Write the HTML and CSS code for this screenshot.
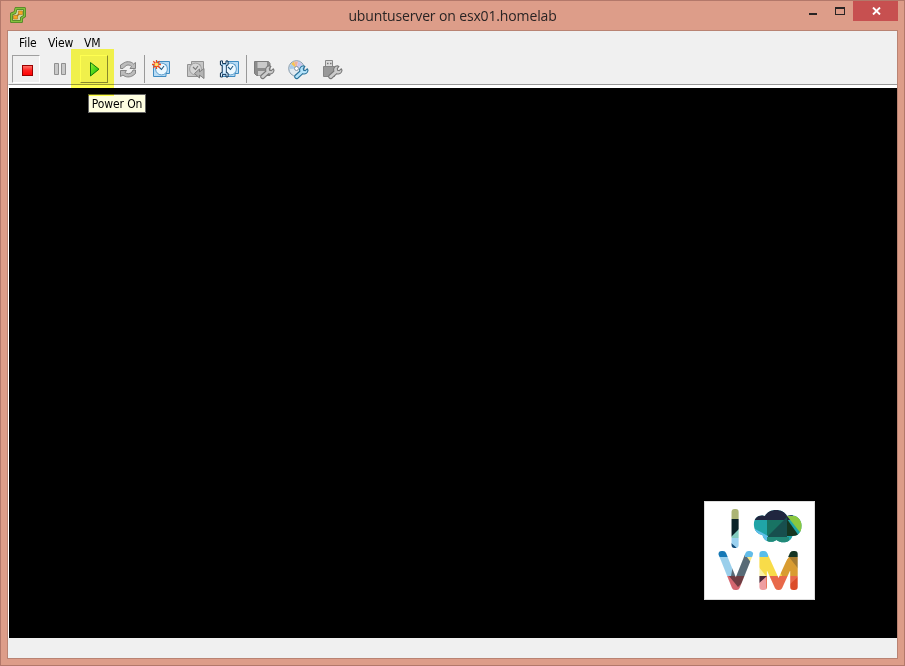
FILE: index.html
```
<!DOCTYPE html>
<html lang="en">
<head>
<meta charset="utf-8">
<title>ubuntuserver on esx01.homelab</title>
<link rel="stylesheet" href="styles.css">
</head>
<body>
<svg width="0" height="0" class="defs" aria-hidden="true">
  <defs>
    <linearGradient id="red" x1="0" y1="0" x2="0" y2="1"><stop offset="0" stop-color="#ff7a6e"/><stop offset=".5" stop-color="#ff2020"/><stop offset="1" stop-color="#f00"/></linearGradient>
    <linearGradient id="green" x1="0" y1="0" x2="1" y2="1"><stop offset="0" stop-color="#a0f0a0"/><stop offset=".6" stop-color="#3fd040"/><stop offset="1" stop-color="#10b020"/></linearGradient>
    <g id="wrench"><path d="M7 15.500l4.800-4.300c-.8-2.800.8-5.300 3.700-5.400l1.300.6-1.500 2.300.3 1.500 1.600.4 2-1.700.8 1.300c-.2 3-2.700 4.300-5.200 3.500l-5 4.500c-2 1.300-4-1-2.800-2.700z" fill="var(--fill)" stroke="var(--edge)" stroke-width="1.100"/></g>
    <g id="clock"><path d="M5.500 1.500h12v12h-12z" fill="var(--back)" stroke="var(--rim)"/><path d="M1.500 4.500h12.500v12h-12.500z" fill="var(--back)" stroke="var(--rim)"/><circle cx="9.500" cy="9" r="5.900" fill="var(--face)" stroke="var(--rim)" stroke-width=".8"/><path d="M7 7l2.500 2.500L12 6" fill="none" stroke="var(--hand)" stroke-width="1.100"/></g>
  </defs>
</svg>
<div class="window">
  <header class="titlebar">
    <svg class="app" width="18" height="18" viewBox="0 0 18 18"><path d="M7 2.500h8.500v7.500l-3 2v3.500h-10V8L6 6.500z" fill="#d2d6a4" stroke="#4c7c24" stroke-width="3" stroke-linejoin="round"/><path d="M7 2.500h8.500v7.500l-3 2v3.500h-10V8L6 6.500z" fill="none" stroke="#84c13c" stroke-width="1.500" stroke-linejoin="round"/><path d="M9.500 5h4v3.500h-4zM4.500 9.500h4V13h-4z" fill="#f5a722" stroke="#b37416" stroke-width=".6"/><path d="M8 10l2-2" stroke="#b37416" stroke-width="1.500"/></svg>
    <h1>ubuntuserver on esx01.homelab</h1>
    <div class="controls">
      <i class="min"></i><i class="max"></i>
      <button class="close" aria-label="Close"><svg width="9" height="8" viewBox="0 0 9 8"><path d="M1 .5l7 7M8 .5l-7 7" stroke="#fff" stroke-width="1.900"/></svg></button>
    </div>
  </header>
  <main class="client">
    <nav class="menu"><span class="file">File</span><span class="view">View</span><span class="vm">VM</span></nav>
    <div class="toolbar">
      <span class="btn sunken"><svg width="20" height="20"><rect x="4.500" y="4.500" width="10" height="10" fill="url(#red)" stroke="#900" /></svg></span>
      <span class="btn"><svg width="20" height="20"><path d="M2.500 2.500h4v11h-4zM9.500 2.500h4v11h-4z" fill="#c9c9c9" stroke="#909090"/></svg></span>
      <span class="btn raised"><svg width="20" height="20"><path d="M4.500 1.500v13.500l8.500-6.800z" fill="url(#green)" stroke="#117b20"/></svg></span>
      <span class="btn"><svg width="20" height="20"><g fill="#bcbcbc" stroke="#7c7c7c" stroke-width=".9" stroke-linejoin="round"><path d="M.5 7.500V4L3 2.500C6 0 11 0 13.500 3l2-1.500v6H10l1.500-2C9.500 3.500 6.500 3.500 4.500 6L3 7.500z"/><path d="M15.500 9v3.500L13 14.500c-3 2-7.500 2-10-.5l-2.500 1.500v-6H6.500l-1.500 2c2 1.800 5 1.600 7-.5L13 9z"/></g></svg></span>
      <b class="sep"></b>
      <span class="btn blue"><svg class="left" width="20" height="20"><use href="#clock"/><path d="M4.500 0v9M0 4.500h9M1.300 1.300l6.400 6.400M7.700 1.300L1.300 7.700" stroke="#f0491b" stroke-width="1.300"/><circle cx="4.500" cy="4.500" r="1.800" fill="#ffe36b"/></svg></span>
      <span class="btn gray"><svg class="left" width="20" height="20"><use href="#clock"/><path d="M8.500 13.500l5-4.500v3l4.500-3.500v10l-4.500-3.500v3z" fill="#b4b4b4" stroke="#808080"/></svg></span>
      <span class="btn blue"><svg class="left" width="20" height="20"><use href="#clock" x="1"/><path d="M.5 1v3.500l1.800 1.500v6L.5 13.500V17M8 1v3.500L6.200 6v6L8 13.500V17" fill="none" stroke="#173b5c" stroke-width="1.200"/><path d="M2.800 4.500h2.900v9H2.800zM1.100 1.500h1.400v3H1.100zM6 1.500h1.400v3H6zM1.100 13.500h1.400v3H1.100zM6 13.500h1.400v3H6z" fill="#dcefff"/><path d="M.5.900h2v2.600h3.500V.9h2M.5 17h2v-2.600h3.500V17h2" fill="none" stroke="#173b5c"/></svg></span>
      <b class="sep"></b>
      <span class="btn gray"><svg class="left" width="22" height="20"><path d="M.500 1.500h14l1.500 2v12H2.500l-2-2z" fill="#8c8c8c" stroke="#7c7c7c"/><path d="M3.500 2h9.500v6H3.500zM4 11h8v4.500H4z" fill="#c9c9c9"/><use href="#wrench"/></svg></span>
      <span class="btn blue"><svg class="left" width="22" height="20"><circle cx="8.500" cy="8.500" r="7.800" fill="#e2eaf0" stroke="#8298aa"/><path d="M8.500 8.500L3 4 6 1.500z" fill="#f5c451"/><path d="M8.500 8.500L6 1.500h4z" fill="#efb09d"/><path d="M8.500 8.500L1 9l2-5z" fill="#a9cbe8"/><path d="M8.500 8.500l2-7 4 3z" fill="#c5c3ef"/><circle cx="8.500" cy="8.500" r="2" fill="#fff" stroke="#8899a8"/><use href="#wrench"/></svg></span>
      <span class="btn gray"><svg class="left" width="22" height="20"><path d="M3.500.500h7v6h-7z" fill="#ddd" stroke="#888"/><path d="M1.500 6.500h11v10h-11z" fill="#999" stroke="#858585"/><path d="M5 3.500h1.500M8 3.500h1.500" stroke="#777" stroke-width="1.500"/><use href="#wrench"/></svg></span>
    </div>
    <section class="console">
      <svg class="logo" width="111" height="99" viewBox="0 0 111 99">
        <defs>
          <mask id="letters" maskUnits="userSpaceOnUse" x="0" y="0" width="111" height="99"><g class="letters"><text x="31.200" y="44.200">I</text><text transform="translate(31.700 86.300) scale(1.080 1)">V</text><text transform="translate(74.700 86.300) scale(1.060 1)">M</text></g></mask>
          <clipPath id="cloud"><path d="M50 25c-1-8 5-12 11-10 4-8 18-8 22 0 8-3 15 3 14.500 10 0 7-4 10-9 10-2 7-11 8-16 4-6 4-13 1-14-5-5-1-8-4-8.500-9z"/></clipPath>
        </defs>
        <rect x=".5" y=".5" width="110" height="98" fill="#fff" stroke="#ddd"/>
        <g mask="url(#letters)">
          <path fill="#abb475" d="M25 5h12v13H25z"/><path fill="#0b2228" d="M25 18h12v20H25z"/><path fill="#82cbbf" d="M25 38l12-12v12z"/><path fill="#9bd1f0" d="M25 37h12v12H25z"/><path fill="#104a78" d="M25 40l10 9H25z"/>
          <path fill="#9acfeb" d="M12 49h20v26H12z"/><path fill="#1678b5" d="M12 49h12v7H12z"/><path fill="#586a76" d="M32 49h18v26H27z"/><path fill="#63bce8" d="M41 49h11v7H41z"/><path fill="#fae98a" d="M43 56h9l-4 7z"/><path fill="#d4666f" d="M12 75h40v16H12z"/><path fill="#6f3c42" d="M25 75h20L34 86z"/>
          <path fill="#f8dc49" d="M54 49h28v26H54z"/><path fill="#59bee9" d="M54 49h10v7H54z"/><path fill="#faf0a4" d="M54 65l8 10h-8z"/><path fill="#d99c31" d="M75 68l10-12h11v19H78z"/><path fill="#a67b2f" d="M85 56h11v14z"/><path fill="#143524" d="M84 49h12v7H84z"/><path fill="#e8694a" d="M62 75h34v16H62z"/><path fill="#ee9da1" d="M54 75h8v16h-8z"/><path fill="#49283a" d="M54 75h9l-9 8z"/><path fill="#dc4d2a" d="M85 84l10-9v16h-10z"/>
        </g>
        <g clip-path="url(#cloud)"><path fill="#20a4a7" d="M49 8h50v36H49z"/><path fill="#20263f" d="M49 8h40v11H49z"/><path fill="#187363" d="M63 19h20L63 38z"/><path fill="#174f4e" d="M83 16L63 36h20z"/><path fill="#8bc73f" d="M83 15h16v20z"/><path fill="#153621" d="M83 18l12 17H83z"/><path fill="#5fbfea" d="M51 28l13 7v5H51z"/><path fill="#228978" d="M63 36h22v7H63z"/></g>
      </svg>
    </section>
    <footer class="status"></footer>
  </main>
  <div class="tooltip">Power On</div>
  <div class="highlight"></div>
</div>
</body>
</html>
```
FILE: styles.css
```
* { box-sizing: border-box; }
body { margin: 0; overflow: hidden; }
.defs { position: absolute; }
.window { position: relative; width: 905px; height: 666px; padding: 0 6px 6px; background: #dd9d89; border: 1px solid #b3786a; display: flex; flex-direction: column; isolation: isolate; }
.titlebar { height: 29px; display: grid; grid-template-columns: 104px 1fr 104px; align-items: start; }
.app { margin: 5px 0 0 2px; }
h1 { margin: 4px 0 0; text-align: center; font: 400 14px/22px "Open Sans", sans-serif; color: #292424; letter-spacing: -.14px; white-space: nowrap; }
.controls { display: flex; height: 20px; justify-content: flex-end; align-items: flex-start; }
.min { width: 8px; height: 2px; background: #292424; margin: 12px 18px 0 0; }
.max { width: 10px; height: 8px; border: 1px solid #292424; border-top-width: 2px; margin: 6px 8px 0 0; }
.close { width: 45px; height: 20px; padding: 0 0 0 1px; border: 0; background: #c75050; display: flex; align-items: center; justify-content: center; }
.client { flex: 1; border: 1px solid #b98373; background: #f0f0f0; display: flex; flex-direction: column; min-height: 0; }
.menu { height: 24px; padding-left: 11px; display: flex; font: 12px/24px "DejaVu Sans Condensed", "DejaVu Sans", sans-serif; letter-spacing: -.1px; color: #000; }
.file { width: 29px; }
.view { width: 36px; }
.toolbar { height: 29px; padding-left: 4px; display: flex; gap: 6px; }
.btn { width: 28px; height: 28px; padding: 5px 0 0 5px; flex: none; border: 1px solid transparent; }
.btn svg { display: block; overflow: visible; }
.btn .left { margin: -1px 0 0 -2px; }
.sunken { border-color: #a0a0a0 #fff #fff #a0a0a0; }
.raised { border-color: #fff #888 #888 #fff; }
.sep { width: 1px; height: 28px; background: #999; margin: 0 -3px 0 -4px; }
.blue { --back: #b9dcf5; --face: #edf8ff; --rim: #3f8cc2; --hand: #245b83; --fill: #b5e3fa; --edge: #287199; }
.gray { --back: #c7c7c7; --face: #d6d6d6; --rim: #929292; --hand: #777; --fill: #ccc; --edge: #777; }
.console { height: 554px; background: #000; border-top: 1px solid #999; border-left: 1px solid #fff; box-shadow: inset 0 3px #fff; padding: 416px 0 0 695px; }
.logo { display: block; }
.letters { font: 100 45px Inter, sans-serif; fill: #fff; stroke: #fff; stroke-width: 6px; stroke-linejoin: round; text-anchor: middle; }
.status { flex: 1; }
.tooltip { position: absolute; left: 87px; top: 93px; width: 58px; height: 19px; border: 1px solid #666; background: #ffffe1; font: 12px/18px "DejaVu Sans Condensed", "DejaVu Sans", sans-serif; letter-spacing: -.1px; text-align: center; white-space: nowrap; color: #000; }
.highlight { position: absolute; left: 70px; top: 48px; width: 43px; height: 47px; background: #ffff50; mix-blend-mode: multiply; pointer-events: none; }
```
